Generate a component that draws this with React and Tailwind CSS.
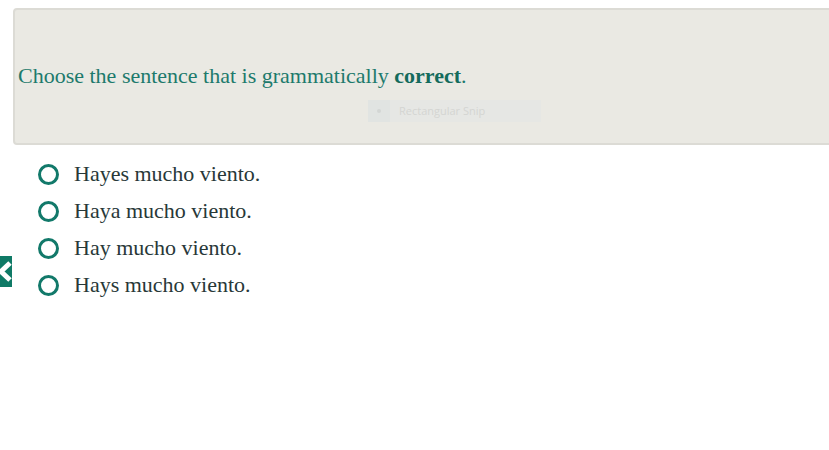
export default function App() {
  const options = ["Hayes mucho viento.", "Haya mucho viento.", "Hay mucho viento.", "Hays mucho viento."];
  return (
    <div className="relative w-[829px] h-[450px] bg-white overflow-hidden" style={{ fontFamily: '"Liberation Serif", "Times New Roman", serif' }}>
      <div className="pt-[8px] pl-[13px]">
        <div className="relative h-[137px] w-[830px] bg-[#eae9e3] border-2 border-[#dcdbd5] rounded-[4px] flex items-center pl-[3px]">
          <p className="text-[22px] text-[#1d7a6c] -mt-[2px]">
            Choose the sentence that is grammatically <b className="text-[#146b5c]">correct</b>.
          </p>
          <div className="absolute left-[353px] top-[90px] w-[173px] h-[22px] bg-[#e6e7e4] flex items-center">
            <div className="w-[22px] h-[22px] bg-[#e1e4e2] flex items-center justify-center">
              <div className="w-[4px] h-[4px] rounded-full bg-[#d3d6d4]"></div>
            </div>
            <span className="ml-[9px] text-[11px] text-[#d4d5d2]" style={{ fontFamily: '"Open Sans", sans-serif' }}>Rectangular Snip</span>
          </div>
        </div>
      </div>
      <div className="flex flex-col gap-[11px] pl-[38px] pt-[16px]">
        {options.map((o) => (
          <div key={o} className="flex items-center h-[26px]">
            <div className="w-[21px] h-[21px] rounded-full border-[3px] border-[#12796a] bg-white"></div>
            <span className="ml-[15px] text-[22px] text-[#283838] leading-none">{o}</span>
          </div>
        ))}
      </div>
      <div className="absolute left-0 top-[256px] w-[12px] h-[31px] bg-[#0f7a66] overflow-hidden">
        <svg width="12" height="31" viewBox="0 0 12 31">
          <path d="M10 7 L1 15.5 L10 24" fill="none" stroke="white" strokeWidth="5" strokeLinejoin="miter" />
        </svg>
      </div>
    </div>
  );
}
